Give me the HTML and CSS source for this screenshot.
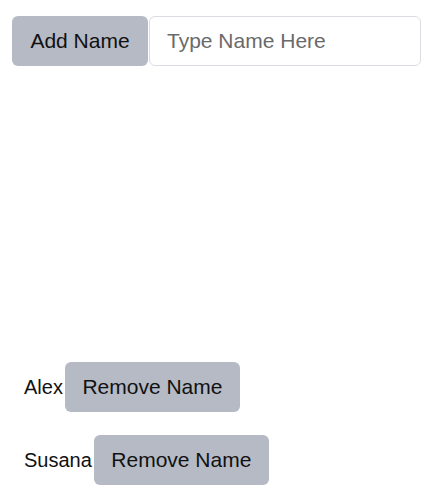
FILE: index.html
```html
<!DOCTYPE html>
<html>
<head>
<meta charset="utf-8">
<link rel="stylesheet" href="styles.css">
</head>
<body>
<div class="app">
  <div class="add-row">
    <button class="btn add-btn">Add Name</button>
    <input class="name-input" type="text" placeholder="Type Name Here">
  </div>
  <ul class="names">
    <li class="name-row"><span class="name">Alex</span><button class="btn">Remove Name</button></li>
    <li class="name-row"><span class="name">Susana</span><button class="btn">Remove Name</button></li>
  </ul>
</div>
</body>
</html>
```
FILE: styles.css
```css
* { box-sizing: border-box; }
html, body { margin: 0; padding: 0; background: #fff; }
body {
  font-family: "Liberation Sans", Arial, sans-serif;
  font-size: 20px;
  color: #111;
}
.app { padding: 16px 12px; }
.add-row {
  display: flex;
  align-items: stretch;
  gap: 1px;
}
.btn {
  font-family: inherit;
  font-size: 21px;
  color: #111;
  background: #b5bac5;
  border: none;
  border-radius: 6px;
  height: 50px;
  padding: 0 16px;
}
.add-btn { width: 136px; }
.name-input {
  width: 272px;
  height: 50px;
  border: 1px solid #dcdde3;
  border-radius: 6px;
  padding: 0 17px;
  font-family: inherit;
  font-size: 21px;
  color: #111;
}
.name-input::placeholder { color: #6a6a6a; }
.names {
  list-style: none;
  margin: 296px 0 0;
  padding: 0 0 0 12px;
  display: flex;
  flex-direction: column;
  gap: 23px;
}
.name-row {
  display: flex;
  align-items: center;
  gap: 2px;
}
.name { font-size: 20px; }
.name-row .btn { width: 175px; }
```
